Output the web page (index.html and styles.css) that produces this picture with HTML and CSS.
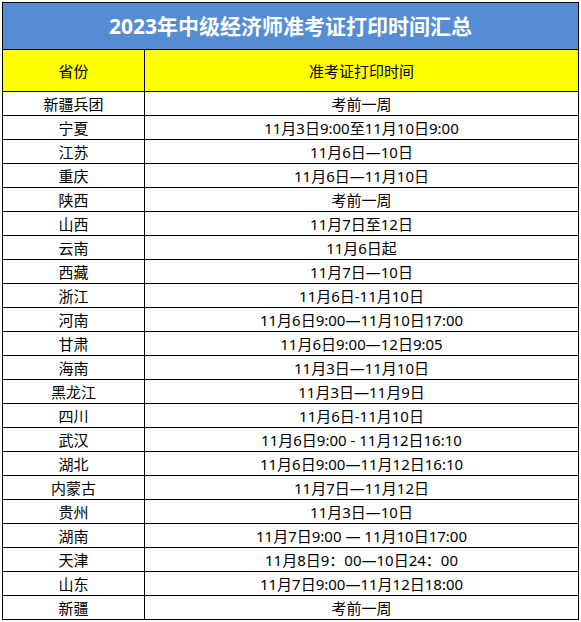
FILE: index.html
```html
<!DOCTYPE html>
<html lang="zh-CN">
<head>
<meta charset="utf-8">
<title>2023年中级经济师准考证打印时间汇总</title>
<link rel="stylesheet" href="styles.css">
</head>
<body>
<table class="sheet">
  <colgroup><col class="c1"><col class="c2"></colgroup>
  <tr class="title-row"><th colspan="2">2023年中级经济师准考证打印时间汇总</th></tr>
  <tr class="head-row"><th>省份</th><th>准考证打印时间</th></tr>
  <tr><td>新疆兵团</td><td>考前一周</td></tr>
  <tr><td>宁夏</td><td>11月3日9:00至11月10日9:00</td></tr>
  <tr><td>江苏</td><td>11月6日—10日</td></tr>
  <tr><td>重庆</td><td>11月6日—11月10日</td></tr>
  <tr><td>陕西</td><td>考前一周</td></tr>
  <tr><td>山西</td><td>11月7日至12日</td></tr>
  <tr><td>云南</td><td>11月6日起</td></tr>
  <tr><td>西藏</td><td>11月7日—10日</td></tr>
  <tr><td>浙江</td><td>11月6日-11月10日</td></tr>
  <tr><td>河南</td><td>11月6日9:00—11月10日17:00</td></tr>
  <tr><td>甘肃</td><td>11月6日9:00—12日9:05</td></tr>
  <tr><td>海南</td><td>11月3日—11月10日</td></tr>
  <tr><td>黑龙江</td><td>11月3日—11月9日</td></tr>
  <tr><td>四川</td><td>11月6日-11月10日</td></tr>
  <tr><td>武汉</td><td>11月6日9:00 - 11月12日16:10</td></tr>
  <tr><td>湖北</td><td>11月6日9:00—11月12日16:10</td></tr>
  <tr><td>内蒙古</td><td>11月7日—11月12日</td></tr>
  <tr><td>贵州</td><td>11月3日—10日</td></tr>
  <tr><td>湖南</td><td>11月7日9:00 — 11月10日17:00</td></tr>
  <tr><td>天津</td><td>11月8日9：00—10日24：00</td></tr>
  <tr><td>山东</td><td>11月7日9:00—11月12日18:00</td></tr>
  <tr><td>新疆</td><td>考前一周</td></tr>
</table>
</body>
</html>
```
FILE: styles.css
```css
html, body {
  margin: 0;
  padding: 0;
  background: #ffffff;
}
body {
  padding: 2px 0 0 2px;
  font-family: "Noto Sans", "Noto Sans CJK SC", sans-serif;
  color: #000000;
}
.sheet {
  border-collapse: collapse;
  width: 577px;
  table-layout: fixed;
}
.c1 { width: 142px; }
.sheet th, .sheet td {
  border: 1px solid #000000;
  padding: 0;
  text-align: center;
  vertical-align: middle;
  font-size: 15px;
  font-weight: normal;
  line-height: 18px;
  white-space: nowrap;
}
.sheet td { height: 23px; }
.title-row th {
  background: #548dd4;
  color: #ffffff;
  font-weight: bold;
  font-size: 21px;
  height: 46px;
}
.head-row th {
  background: #ffff00;
  height: 41px;
}
```
